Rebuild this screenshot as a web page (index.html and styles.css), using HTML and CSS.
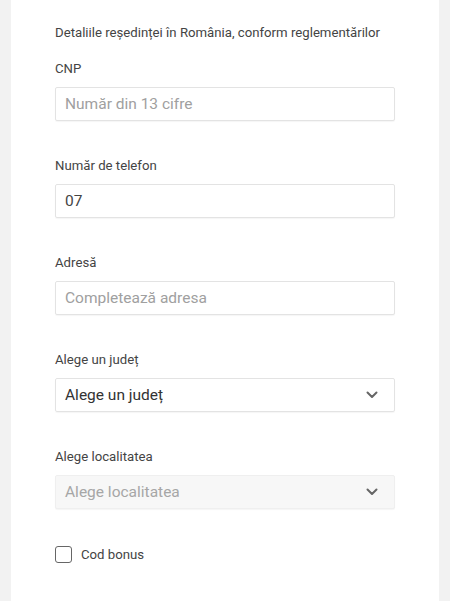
FILE: index.html
```html
<!DOCTYPE html>
<html lang="ro">
<head>
    <meta charset="UTF-8">
    <meta name="viewport" content="width=device-width, initial-scale=1.0">
    <title>Detalii reședință</title>
    <link rel="stylesheet" href="styles.css">
</head>
<body>
    <div class="card">
        <p class="intro">Detaliile reședinței în România, conform reglementărilor</p>

        <div class="field">
            <label for="cnp">CNP</label>
            <input type="text" id="cnp" placeholder="Număr din 13 cifre">
        </div>

        <div class="field">
            <label for="phone">Număr de telefon</label>
            <input type="text" id="phone" value="07">
        </div>

        <div class="field">
            <label for="address">Adresă</label>
            <input type="text" id="address" placeholder="Completează adresa">
        </div>

        <div class="field">
            <label for="county">Alege un județ</label>
            <div class="select">
                <span>Alege un județ</span>
                <svg width="12" height="8" viewBox="0 0 12 8"><path d="M1.5 1.5 6 6l4.5-4.5" fill="none" stroke="#666" stroke-width="2" stroke-linecap="round" stroke-linejoin="round"/></svg>
            </div>
        </div>

        <div class="field">
            <label for="city">Alege localitatea</label>
            <div class="select disabled">
                <span>Alege localitatea</span>
                <svg width="12" height="8" viewBox="0 0 12 8"><path d="M1.5 1.5 6 6l4.5-4.5" fill="none" stroke="#666" stroke-width="2" stroke-linecap="round" stroke-linejoin="round"/></svg>
            </div>
        </div>

        <label class="check">
            <span class="box"></span>
            Cod bonus
        </label>
    </div>
</body>
</html>
```

FILE: styles.css
```css
body {
    margin: 0;
    background-color: #f2f2f2;
    font-family: Roboto, "Liberation Sans", sans-serif;
    color: #444;
}

.card {
    background-color: #fff;
    margin: 0 11px;
    padding: 25px 44px 40px 44px;
    min-height: 601px;
    box-sizing: border-box;
}

.intro {
    margin: 0 0 20px 0;
    font-size: 13.2px;
    line-height: 16px;
}

.field {
    margin-bottom: 37px;
}

.field label {
    display: block;
    font-size: 13.2px;
    line-height: 16px;
    margin-bottom: 10px;
}

input {
    display: block;
    width: 100%;
    height: 34px;
    box-sizing: border-box;
    padding: 0 9px;
    border: 1px solid #e3e3e3;
    border-radius: 2px;
    box-shadow: 0 1px 1px rgba(0, 0, 0, 0.04);
    font-family: inherit;
    font-size: 15.5px;
    color: #444;
    outline: none;
}

input::placeholder {
    color: #a0a0a0;
}

.select {
    display: flex;
    align-items: center;
    justify-content: space-between;
    height: 34px;
    box-sizing: border-box;
    padding: 0 16px 0 9px;
    border: 1px solid #e3e3e3;
    border-radius: 2px;
    box-shadow: 0 1px 1px rgba(0, 0, 0, 0.04);
    font-size: 15.5px;
    color: #333;
}

.select.disabled {
    background-color: #f7f7f7;
    border-color: #efefef;
    color: #a6a6a6;
}

.check {
    display: flex;
    align-items: center;
    font-size: 13.2px;
    color: #444;
    margin-top: 0;
}

.check .box {
    width: 15px;
    height: 15px;
    border: 1.5px solid #666;
    border-radius: 3px;
    margin-right: 9px;
}
```
